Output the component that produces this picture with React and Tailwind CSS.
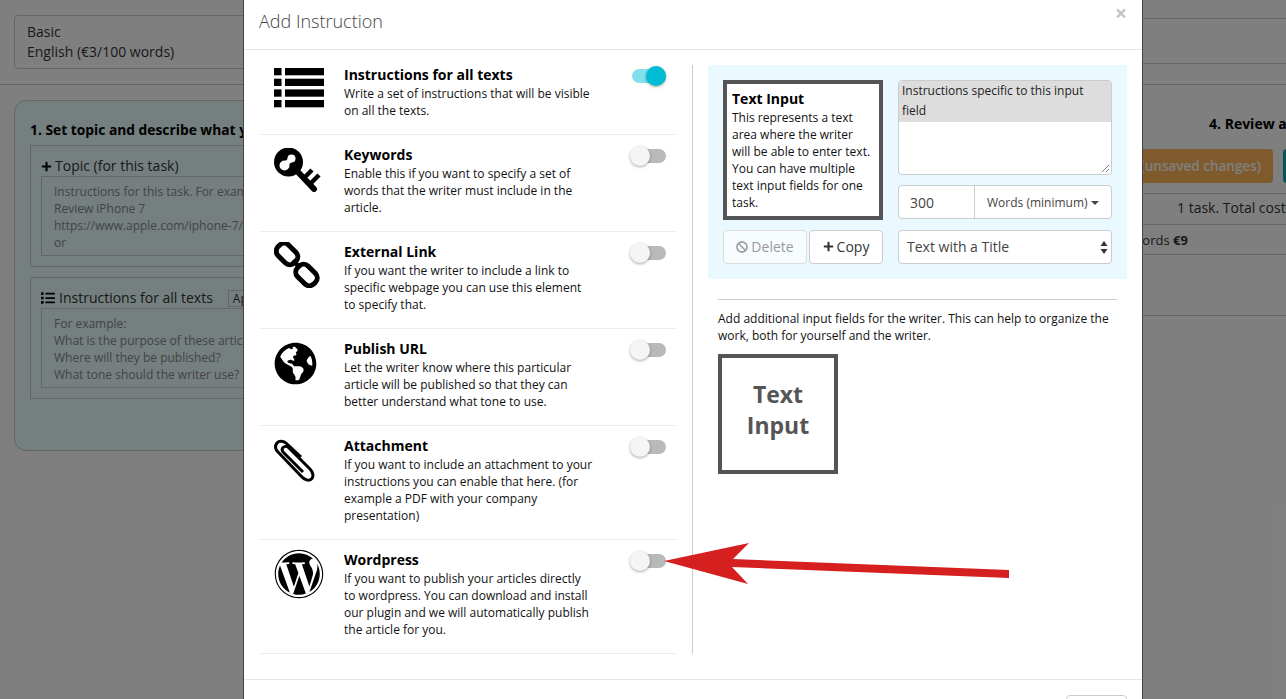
import React from 'react';
import { FaGlobeAmericas, FaWordpress, FaPlus, FaBan, FaList } from 'react-icons/fa';

const ListIcon = () => (
  <svg width="50" height="40" viewBox="0 0 50 40" fill="#000">
    {[0, 10.7, 21.4, 32].map((y) => (
      <g key={y}>
        <rect x="0" y={y} width="7.5" height="7.3" />
        <rect x="11" y={y} width="39" height="7.3" />
      </g>
    ))}
  </svg>
);

const KeyIcon = () => (
  <svg width="48" height="44" viewBox="0 0 48 44" fill="none" stroke="#000">
    <circle cx="14.5" cy="14" r="14.5" fill="#000" stroke="none" />
    <circle cx="10.5" cy="17.5" r="5" fill="#fff" stroke="none" />
    <circle cx="17.5" cy="10.5" r="4" fill="#fff" stroke="none" />
    <path d="M11 17 L17 11" stroke="#fff" strokeWidth="5" />
    <path d="M23 23 L40 41" strokeWidth="6" strokeLinecap="round" />
    <path d="M30 30 L38 22 M36 36 L45 27" strokeWidth="4.5" />
  </svg>
);

const ChainIcon = () => (
  <svg width="46" height="46" viewBox="0 0 46 46" fill="none" stroke="#000" strokeWidth="5">
    <rect x="1.5" y="4.5" width="23" height="15" rx="6.5" transform="rotate(45 13 12)" />
    <rect x="21" y="25.5" width="23" height="15" rx="6.5" transform="rotate(45 32.5 33)" />
    <path d="M19 18 L26 26" strokeWidth="4.5" />
  </svg>
);

const ClipIcon = () => (
  <svg width="42" height="46" viewBox="0 0 42 46" fill="none" stroke="#000" strokeWidth="3" strokeLinejoin="round">
    <path d="M27 19 L12.5 5.5 C9.5 2.5 5 2.5 3 5 C0.8 7.8 1 11 4 14 L27 38 C30.5 42 35 43.5 37.5 41 C40 38.5 39 34 36 31 L15 10 C13 8 10.5 8 9 9.5 C7.5 11 7.8 13 10 15 L29 34" />
  </svg>
);

const Toggle = ({ on }) => (
  <div className="relative w-[36px] h-[20px]">
    <div className={`absolute left-[2px] top-[3px] w-[34px] h-[14px] rounded-full ${on ? 'bg-[#80e1ec]' : 'bg-[#b9b9b9]'}`} />
    <div className={`absolute top-0 w-[20px] h-[20px] rounded-full shadow-[0_1px_3px_rgba(0,0,0,0.35)] ${on ? 'left-[16px] bg-[#00bcd4]' : 'left-0 bg-[#f5f5f5]'}`} />
  </div>
);

const rows = [
  ['Instructions for all texts', ['Write a set of instructions that will be visible', 'on all the texts.'], <ListIcon />, 13, true],
  ['Keywords', ['Enable this if you want to specify a set of', 'words that the writer must include in the', 'article.'], <KeyIcon />, 13, false],
  ['External Link', ['If you want the writer to include a link to', 'specific webpage you can use this element', 'to specify that.'], <ChainIcon />, 10, false],
  ['Publish URL', ['Let the writer know where this particular', 'article will be published so that they can', 'better understand what tone to use.'], <FaGlobeAmericas size={43} color="#000" />, 13, false],
  ['Attachment', ['If you want to include an attachment to your', 'instructions you can enable that here. (for', 'example a PDF with your company', 'presentation)'], <ClipIcon />, 12, false],
  ['Wordpress', ['If you want to publish your articles directly', 'to wordpress. You can download and install', 'our plugin and we will automatically publish', 'the article for you.'], <FaWordpress size={50} color="#000" />, 9, false],
];

function Row({ title, lines, icon, iconTop, on }) {
  return (
    <div className="relative flex border-b border-[#eeeeee] pt-[10px] pb-[15px] pl-[15px]">
      <div className="w-[70px] shrink-0" style={{ marginTop: iconTop - 10 }}>{icon}</div>
      <div className="w-[260px] shrink-0">
        <div className="text-[14px] leading-[20px] font-bold text-black">{title}</div>
        {lines.map((l) => (
          <div key={l} className="text-[12px] leading-[17px] text-[#111] whitespace-nowrap">{l}</div>
        ))}
      </div>
      <div className="absolute left-[371px] top-[11px]">
        <Toggle on={on} />
      </div>
    </div>
  );
}

function Background() {
  return (
    <div className="text-[14px] leading-[20px] text-[#333]">
      <div className="flex h-[85px] border-b border-[#cccccc] gap-[40px]">
        <div className="w-[660px] h-[54px] mt-[15px] ml-[14px] pl-[12px] pt-[6px] border border-[#cccccc] rounded-[4px] shrink-0">
          <div>Basic</div>
          <div>English (€3/100 words)</div>
        </div>
        <div className="w-[700px] h-[46px] mt-[18px] border-y border-[#cccccc] shrink-0" />
      </div>
      <div className="flex">
        <div className="w-[900px] h-[351px] mt-[15px] ml-[14px] pl-[15px] pt-[19px] border border-[#cccccc] rounded-[12px] bg-[#eafeff] shrink-0">
          <div className="text-[13.8px] font-bold text-black leading-[20px] whitespace-nowrap">1. Set topic and describe what you want</div>
          <div className="w-[800px] h-[122px] mt-[5px] border border-[#cccccc] pl-[10px] pt-[10px]">
            <div className="flex items-center gap-[3px] leading-[20px] h-[20px]"><FaPlus size={11} color="#000" />Topic (for this task)</div>
            <div className="h-[80px] border border-[#cccccc] pl-[12px] pt-[6px] text-[12px] leading-[17px] text-[#888] overflow-hidden">
              <div>Instructions for this task. For example:</div>
              <div>Review iPhone 7</div>
              <div>https://www.apple.com/iphone-7/</div>
              <div>or</div>
            </div>
          </div>
          <div className="w-[800px] h-[122px] mt-[10px] border border-[#cccccc] pl-[10px] pt-[10px]">
            <div className="flex items-center gap-[4px] h-[20px]">
              <FaList size={14} color="#000" />Instructions for all texts
              <span className="ml-[11px] border border-[#cccccc] px-[4px] text-[12px] leading-[15px]">Apply</span>
            </div>
            <div className="h-[80px] border border-[#cccccc] pl-[12px] pt-[6px] text-[12px] leading-[17px] text-[#888] overflow-hidden">
              <div>For example:</div>
              <div>What is the purpose of these articles?</div>
              <div>Where will they be published?</div>
              <div>What tone should the writer use?</div>
            </div>
          </div>
        </div>
        <div className="w-[500px] shrink-0 -ml-[100px] pt-[29px]">
          <div className="pl-[395px] font-bold text-black whitespace-nowrap">4. Review and order</div>
          <div className="flex gap-[10px] mt-[15px] h-[34px] pl-[100px] -mr-[100px]">
            <div className="w-[359px] pr-[12px] flex items-center justify-end rounded-[4px] bg-[#ffb558] text-[#ffffff] text-[13.5px] font-semibold shrink-0">(unsaved changes)</div>
            <div className="w-[100px] rounded-[4px] bg-[#17a2b8] shrink-0" />
          </div>
          <div className="mt-[10px] border-t border-[#cccccc] h-[31px] pl-[363px] pt-[4px] text-[#333] whitespace-nowrap">1 task. Total cost</div>
          <div className="border-t border-[#cccccc] h-[30px] pl-[300px] pt-[5px] text-[13px] whitespace-nowrap"><span>30 words </span><b>€9</b></div>
          <div className="border-t border-[#cccccc] h-[61px]" />
          <div className="border-t border-[#cccccc]" />
        </div>
      </div>
    </div>
  );
}

function Modal() {
  return (
    <div className="w-[900px] h-[760px] ml-[243px] bg-white border-x border-[#444444] text-[#333]">
      <div className="relative h-[50px] border-b border-[#e5e5e5] pl-[15px] pt-[8px] text-[18px] leading-[26px] font-light text-[#444]">
        Add Instruction
        <span className="absolute right-[15px] top-[3px] text-[21px] leading-[21px] font-bold text-[#c4c4c4]">×</span>
      </div>
      <div className="flex h-[629px] items-start pt-[5px]">
        <div className="w-[433px] pl-[15px] shrink-0">
          {rows.map(([t, l, i, top, on]) => <Row key={t} title={t} lines={l} icon={i} iconTop={top} on={on} />)}
        </div>
        <div className="w-[435px] h-[589px] mt-[10px] ml-[15px] border-l border-[#cccccc] pl-[15px] shrink-0">
          <div className="w-[419px] h-[214px] bg-[#e9f9ff] p-[15px] flex gap-[15px]">
            <div className="w-[160px] shrink-0">
              <div className="h-[140px] border-[4px] border-[#555555] bg-white px-[5px] pt-[5px] text-[12px] leading-[17px] text-[#111]">
                <div className="text-[14px] leading-[20px] font-bold text-black">Text Input</div>
                <div>This represents a text area where the writer will be able to enter text. You can have multiple text input fields for one task.</div>
              </div>
              <div className="flex gap-[2px] mt-[10px]">
                <div className="w-[84px] h-[34px] pb-[1px] rounded-[4px] border border-[#dcdcdc] bg-[#f7fdff] flex items-center justify-center gap-[3px] text-[14px] text-[#999]"><FaBan size={12} color="#999" />Delete</div>
                <div className="w-[74px] h-[34px] pb-[1px] rounded-[4px] border border-[#cccccc] bg-white flex items-center justify-center gap-[3px] text-[14px] text-[#333]"><FaPlus size={11} color="#333" />Copy</div>
              </div>
            </div>
            <div className="w-[214px] shrink-0">
              <div className="relative h-[95px] rounded-[4px] border border-[#cccccc] bg-white overflow-hidden">
                <div className="h-[41px] bg-[#dddddd] pl-[3px] pr-[10px] text-[12px] leading-[20px] text-[#222]">Instructions specific to this input field</div>
                <svg className="absolute right-[1px] bottom-[1px]" width="9" height="9" viewBox="0 0 9 9" stroke="#777" strokeWidth="1"><path d="M1 8 L8 1 M5 8 L8 5" /></svg>
              </div>
              <div className="flex h-[34px] mt-[10px] rounded-[4px] border border-[#cccccc] bg-white">
                <div className="w-[76px] border-r border-[#cccccc] pl-[11px] flex items-center text-[14px] text-[#444]">300</div>
                <div className="flex-1 flex items-center pl-[12px] pt-[1px] gap-[3px] text-[12px] text-[#444]">Words (minimum)<span className="w-0 h-0 border-x-[4px] border-x-transparent border-t-[4px] border-t-[#444]" /></div>
              </div>
              <div className="relative h-[34px] mt-[11px] pb-[1px] rounded-[4px] border border-[#cccccc] bg-white flex items-center pl-[8px] text-[14px] text-[#444]">
                Text with a Title
                <svg className="absolute right-[3px] top-[10px]" width="8" height="13" viewBox="0 0 8 13" fill="#333"><path d="M4 0 L7.5 5 H0.5 Z M4 13 L7.5 8 H0.5 Z" /></svg>
              </div>
            </div>
          </div>
          <div className="w-[399px] ml-[10px] mt-[20px] border-t border-[#cccccc] pt-[10px] text-[12px] leading-[17px] text-[#111]">
            <div className="whitespace-nowrap">Add additional input fields for the writer. This can help to organize the</div>
            <div>work, both for yourself and the writer.</div>
            <div className="w-[120px] h-[120px] mt-[10px] pb-[9px] border-[4px] border-[#555555] flex items-center justify-center text-center text-[23px] leading-[31px] font-bold text-[#555]">Text<br />Input</div>
          </div>
        </div>
      </div>
      <div className="border-t border-[#e5e5e5] pt-[15px] pl-[822px]">
        <div className="w-[61px] h-[34px] rounded-[4px] border border-[#cccccc]" />
      </div>
    </div>
  );
}

export default function App() {
  return (
    <div className="relative w-[1286px] h-[699px] overflow-hidden bg-white font-['Open_Sans',sans-serif]">
      <Background />
      <div className="absolute inset-0 bg-black/50">
        <Modal />
      </div>
      <svg className="absolute left-0 top-0 pointer-events-none" width="1286" height="699">
        <polygon points="664,561 749,543 733,559 1009,570 1009,578 732,567 748,584" fill="#d61f1f" />
      </svg>
    </div>
  );
}
